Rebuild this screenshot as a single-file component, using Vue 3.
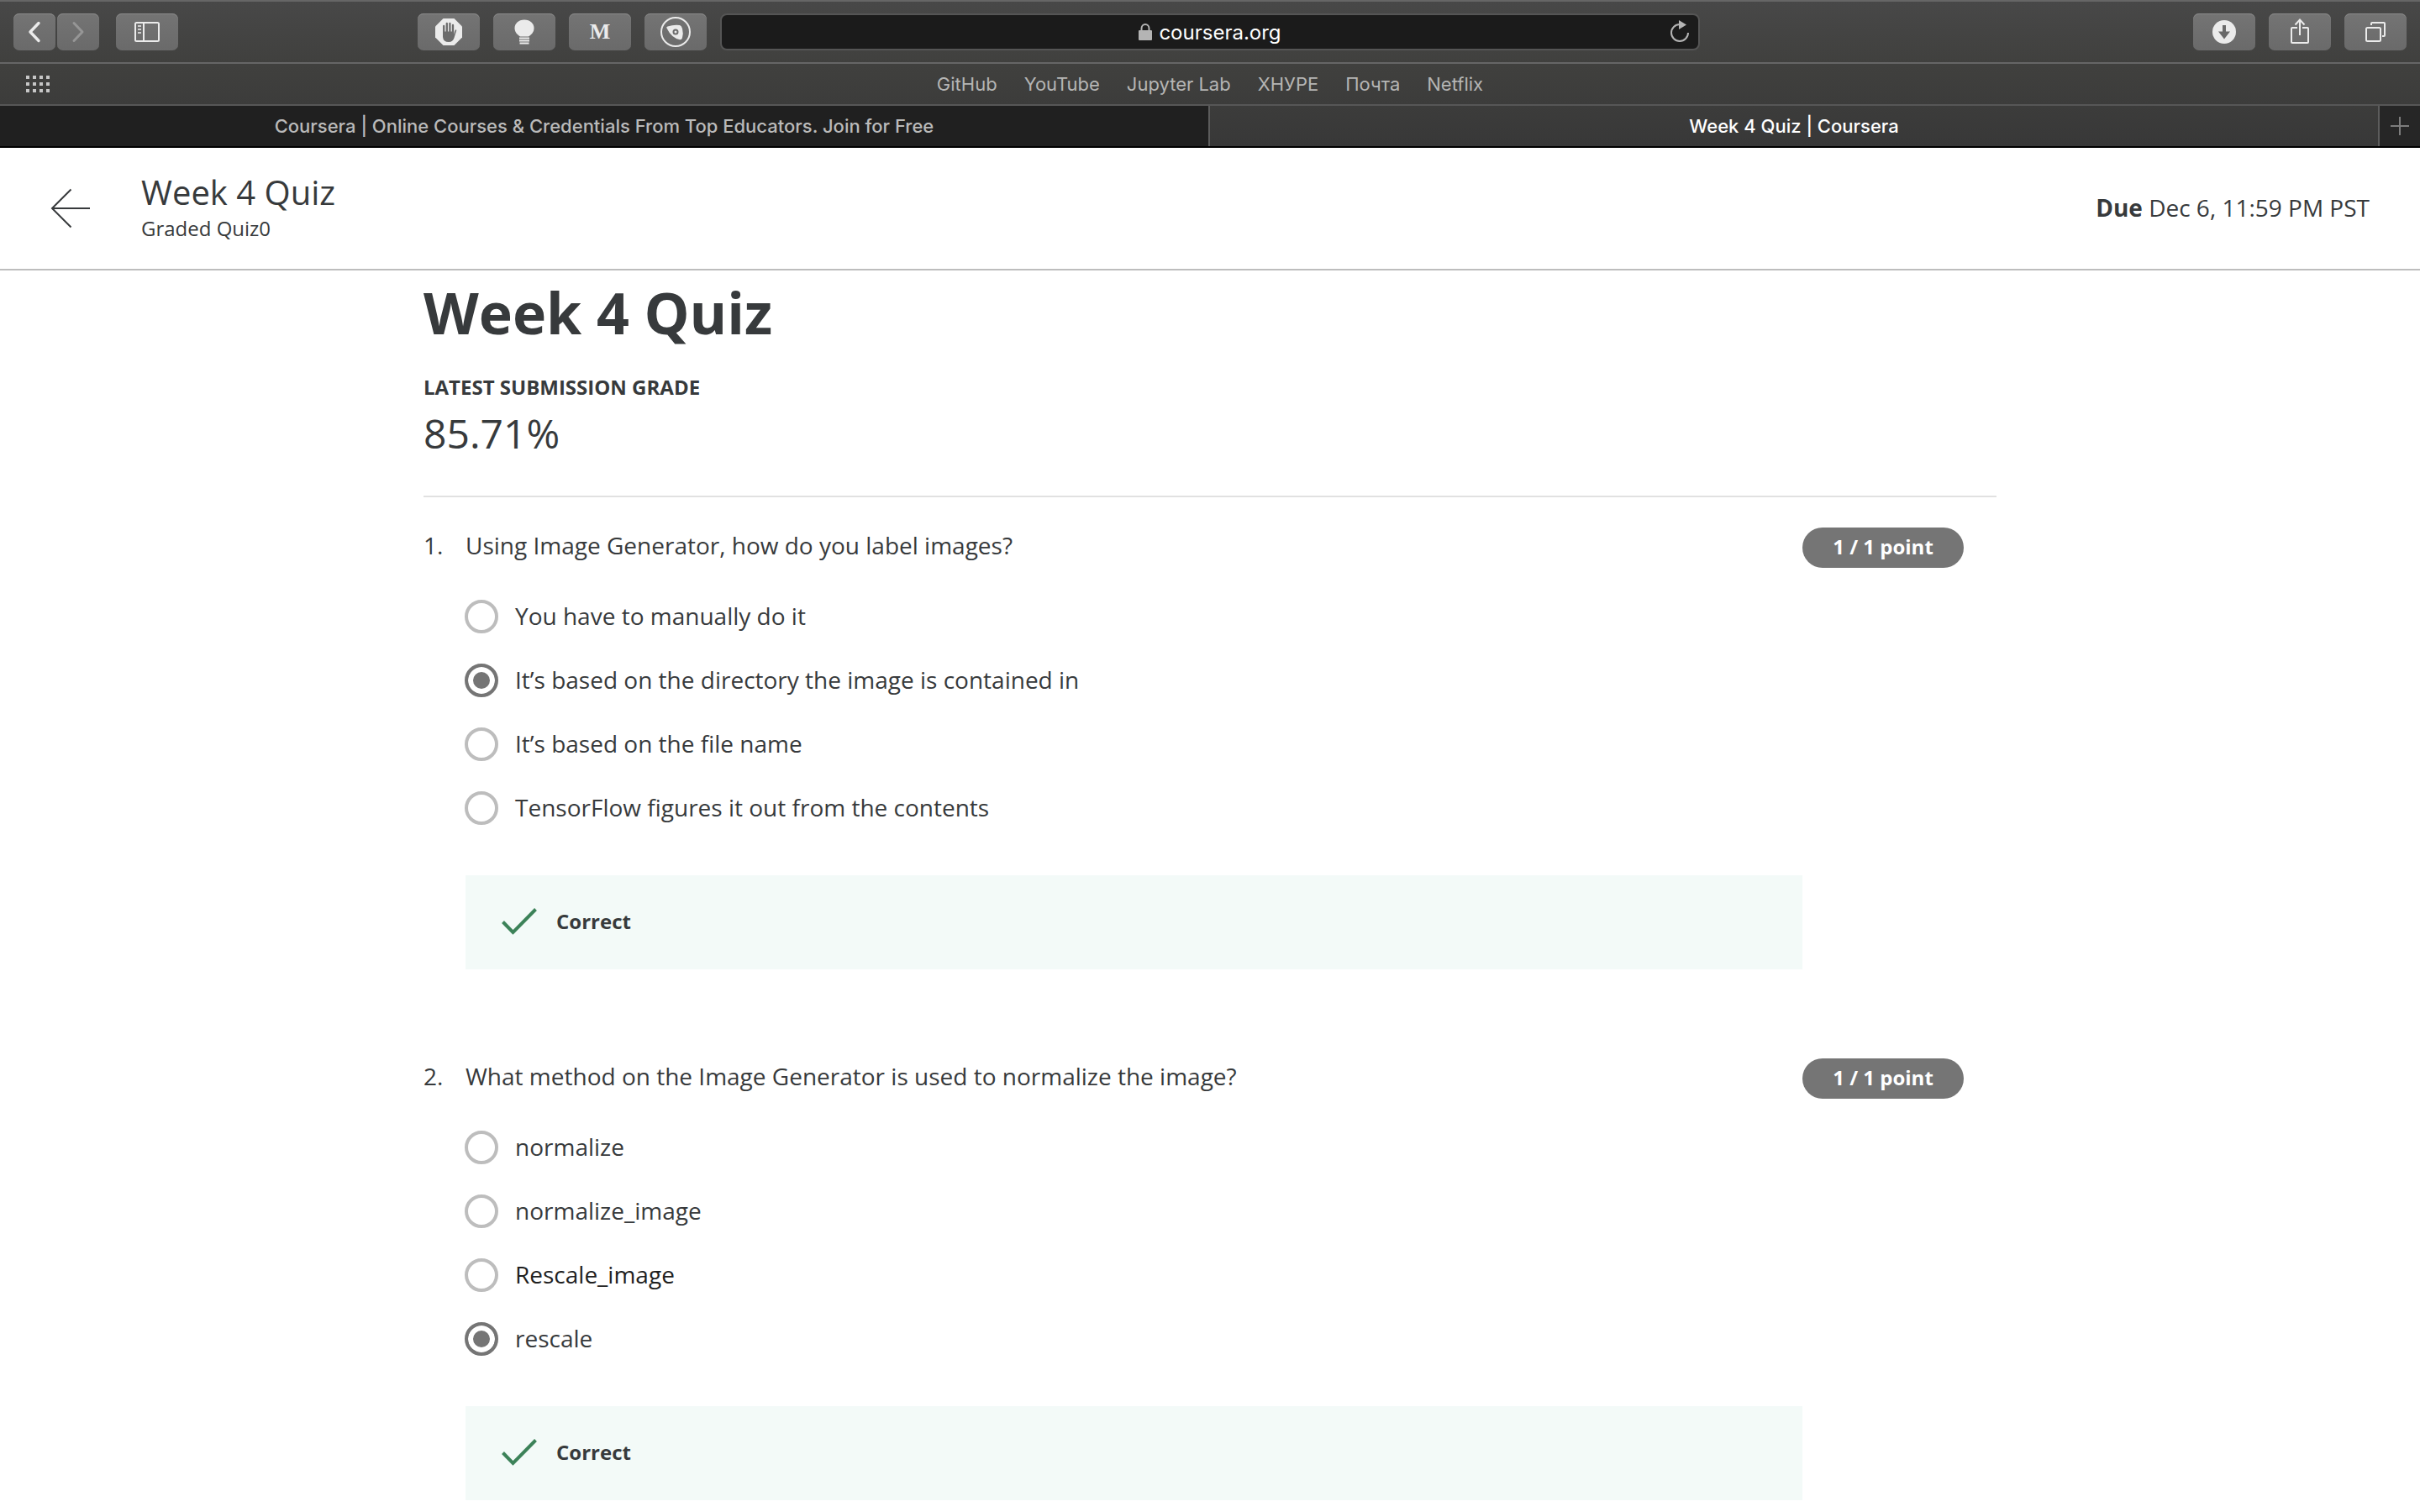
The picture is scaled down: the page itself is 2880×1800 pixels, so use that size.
<script setup>
import { ref } from 'vue'

const bookmarks = ['GitHub', 'YouTube', 'Jupyter Lab', 'ХНУРЕ', 'Почта', 'Netflix']

const questions = ref([
  {
    id: 1,
    text: 'Using Image Generator, how do you label images?',
    options: [
      { label: 'You have to manually do it' },
      { label: 'It’s based on the directory the image is contained in' },
      { label: 'It’s based on the file name' },
      { label: 'TensorFlow figures it out from the contents' }
    ],
    answer: 1
  },
  {
    id: 2,
    text: 'What method on the Image Generator is used to normalize the image?',
    options: [
      { label: 'normalize' },
      { label: 'normalize_image' },
      { label: 'Rescale_image', dark: true },
      { label: 'rescale' }
    ],
    answer: 3
  }
])
</script>

<template>
  <div class="browser">
    <div class="chrome">
      <div class="toolbar">
        <div class="tools">
          <div class="pair">
            <button class="tool narrow" type="button" aria-label="Back">
              <svg width="50" height="44" viewBox="0 0 50 44"><path d="M30 11.500L20 22L30 32.500" fill="none" stroke="#ebebeb" stroke-width="3.400" stroke-linecap="round" stroke-linejoin="round" /></svg>
            </button>
            <button class="tool narrow" type="button" aria-label="Forward">
              <svg width="50" height="44" viewBox="0 0 50 44"><path d="M20 11.500L30 22L20 32.500" fill="none" stroke="#969696" stroke-width="3" stroke-linecap="round" stroke-linejoin="round" /></svg>
            </button>
          </div>
          <button class="tool sidebar" type="button" aria-label="Show sidebar">
            <svg width="74" height="44" viewBox="0 0 74 44">
              <rect x="23" y="11" width="28" height="22" rx="1.500" fill="none" stroke="#ebebeb" stroke-width="2" />
              <path d="M33 11V33" stroke="#ebebeb" stroke-width="2" />
              <path d="M26 15H30M26 19H30M26 23H30" stroke="#d0d0d0" stroke-width="2" />
            </svg>
          </button>
          <div class="extensions">
            <button class="tool" type="button" aria-label="Ad blocker">
              <svg width="74" height="44" viewBox="0 0 74 44">
                <path d="M30.500 6H43.500L53 15.500V28.500L43.500 38H30.500L21 28.500V15.500Z" fill="#ebebeb" />
                <path d="M31.200 24V15M34.800 22V12M38.400 22V12M42 23V14" stroke="#6c6c6c" stroke-width="2.300" stroke-linecap="round" />
                <path d="M30 21.500H43.200V25L44.500 20.500Q45.500 18.500 46.300 20L43.500 29Q42 34 37 34Q30.500 34 30 28Z" fill="#6c6c6c" />
              </svg>
            </button>
            <button class="tool" type="button" aria-label="Lights">
              <svg width="74" height="44" viewBox="0 0 74 44">
                <path d="M37 7.500C44 7.500 48.500 12 48.500 17.500C48.500 22.500 45 25.500 42 27.500H32C29 25.500 25.500 22.500 25.500 17.500C25.500 12 30 7.500 37 7.500Z" fill="#ebebeb" />
                <path d="M31 29.500H43M31 32.500H43M31.500 35.500H42.500" stroke="#ebebeb" stroke-width="2" />
              </svg>
            </button>
            <button class="tool letter" type="button">M</button>
            <button class="tool" type="button" aria-label="Privacy">
              <svg width="74" height="44" viewBox="0 0 74 44">
                <circle cx="37" cy="22" r="17" fill="none" stroke="#ebebeb" stroke-width="2" />
                <path d="M26.500 17.500Q25.500 16 27.500 15.500Q35 13 42 14Q44 14.500 45 18Q46.500 24 45 29Q44.500 31.500 42 31.300Q32 29 26.500 17.500Z" fill="#ebebeb" />
                <circle cx="37" cy="22" r="2.500" fill="#ebebeb" stroke="#6c6c6c" stroke-width="2" />
              </svg>
            </button>
          </div>
        </div>

        <div class="address">
          <label class="site">
            <svg width="16" height="20" viewBox="0 0 16 20" aria-hidden="true">
              <path d="M3.500 9V6A4.500 5 0 0 1 12.500 6V9" fill="none" stroke="#b4b4b4" stroke-width="2" />
              <rect x="0" y="8" width="16" height="12" rx="1" fill="#b4b4b4" />
            </svg>
            <input type="text" aria-label="Address" value="coursera.org" size="12" />
          </label>
          <button class="reload" type="button" aria-label="Reload">
            <svg width="24" height="28" viewBox="0 0 24 28">
              <path d="M12 5A10 10 0 1 0 22 15" fill="none" stroke="#b4b4b4" stroke-width="2" />
              <path d="M11 0L20 5.500L11 11Z" fill="#b4b4b4" />
            </svg>
          </button>
        </div>

        <div class="tools end">
          <button class="tool" type="button" aria-label="Downloads">
            <svg width="74" height="44" viewBox="0 0 74 44">
              <circle cx="37" cy="22" r="14" fill="#ebebeb" />
              <path d="M35 14H39V21.500H44L37 30.500L30 21.500H35Z" fill="#6a6a6a" />
            </svg>
          </button>
          <button class="tool" type="button" aria-label="Share">
            <svg width="74" height="44" viewBox="0 0 74 44">
              <path d="M34 17H28Q27 17 27 18V34Q27 35 28 35H46Q47 35 47 34V18Q47 17 46 17H40" fill="none" stroke="#ebebeb" stroke-width="2" />
              <path d="M37 26V8M31.500 13.500L37 7.500L42.500 13.500" fill="none" stroke="#ebebeb" stroke-width="2" />
            </svg>
          </button>
          <button class="tool" type="button" aria-label="Show tabs">
            <svg width="74" height="44" viewBox="0 0 74 44">
              <rect x="26" y="17" width="17" height="16" rx="1.500" fill="none" stroke="#ebebeb" stroke-width="2" />
              <path d="M32 14V12Q32 11 33 11H47Q48 11 48 12V26Q48 27 47 27H45" fill="none" stroke="#ebebeb" stroke-width="2" />
            </svg>
          </button>
        </div>
      </div>

      <nav class="bookmarks">
        <button class="grid" type="button" aria-label="Top sites">
          <svg width="28" height="20" viewBox="0 0 28 20">
            <path d="M0 2H28M0 10H28M0 18H28" stroke="#c6c6c6" stroke-width="4" stroke-dasharray="4 4" />
          </svg>
        </button>
        <a v-for="name in bookmarks" :key="name" href="#">{{ name }}</a>
      </nav>

      <div class="tabs">
        <a class="tab" href="#">Coursera | Online Courses &amp; Credentials From Top Educators. Join for Free</a>
        <a class="tab current" href="#">Week 4 Quiz | Coursera</a>
        <button class="add" type="button" aria-label="New tab">
          <svg width="22" height="22" viewBox="0 0 22 22"><path d="M11 0V22M0 11H22" stroke="#7c7c7c" stroke-width="2" /></svg>
        </button>
      </div>
    </div>

    <header class="header">
      <a class="back" href="#" aria-label="Back">
        <svg width="48" height="48" viewBox="0 0 48 48"><path d="M24.500 1.500L2 24L24.500 46.500M2 24H47" fill="none" stroke="#373a3c" stroke-width="2" /></svg>
      </a>
      <div class="heading">
        <div class="name">Week 4 Quiz</div>
        <div class="kind">Graded Quiz0</div>
      </div>
      <div class="due"><b>Due</b> Dec 6, 11:59 PM PST</div>
    </header>

    <main class="content">
      <h1>Week 4 Quiz</h1>
      <h2>LATEST SUBMISSION GRADE</h2>
      <p class="grade">85.71%</p>

      <div class="questions">
        <section v-for="q in questions" :key="q.id" class="question">
          <div class="number">{{ q.id }}.</div>
          <fieldset class="body">
            <legend>{{ q.text }}</legend>
            <div class="options">
              <label v-for="(o, i) in q.options" :key="o.label" class="option" :class="{ dark: o.dark }">
                <input v-model="q.answer" type="radio" :name="'question-' + q.id" :value="i" />
                <span>{{ o.label }}</span>
              </label>
            </div>
            <div class="result">
              <svg width="44" height="36" viewBox="0 0 44 36" aria-hidden="true"><path d="M2.500 18.500L14.500 31L41.500 3.500" fill="none" stroke="#3c8259" stroke-width="4" /></svg>
              <span>Correct</span>
            </div>
          </fieldset>
          <div class="points">1 / 1 point</div>
        </section>
      </div>
    </main>
  </div>
</template>

<style>
body {
  background: #fff;
}
</style>

<style scoped>
.browser {
  color: #373a3c;
  font-family: "Open Sans", "Noto Sans", sans-serif;
}

button,
input {
  margin: 0;
  padding: 0;
  border: 0;
  background: none;
  font: inherit;
  color: inherit;
}

a {
  color: inherit;
  text-decoration: none;
}

svg {
  display: block;
  flex: none;
}

.chrome {
  background: linear-gradient(#484848, #40403e 44%, #383838);
  border-bottom: 2px solid #000;
  font-family: Inter, "Noto Sans", sans-serif;
}

.toolbar {
  display: grid;
  grid-template-columns: 1fr minmax(400px, 1166px) 1fr;
  align-items: center;
  box-sizing: border-box;
  height: 76px;
  border-top: 2px solid #666;
  border-bottom: 2px solid #666;
}

.tools {
  display: flex;
  padding: 0 16px;
}

.pair {
  display: flex;
  gap: 2px;
}

.tool {
  display: flex;
  align-items: center;
  justify-content: center;
  width: 74px;
  height: 44px;
  border-radius: 7px;
  background: linear-gradient(#747474, #6a6a6a);
  box-shadow: inset 0 1px #8a8a8a;
}

.tool.narrow {
  width: 50px;
}

.tool.sidebar {
  margin-left: 20px;
}

.tool.letter {
  color: #ebebeb;
  font: bold 26px "Liberation Serif", serif;
}

.extensions {
  display: flex;
  gap: 16px;
  margin-left: auto;
}

.end {
  justify-content: flex-end;
  gap: 16px;
}

.address {
  display: grid;
  grid-template-columns: 1fr auto 1fr;
  align-items: center;
  box-sizing: border-box;
  height: 44px;
  padding: 0 10px;
  border: 2px solid #555;
  border-radius: 8px;
  background: #1b1b1b;
}

.site {
  grid-column: 2;
  display: flex;
  align-items: center;
  gap: 8px;
}

.site input {
  padding-top: 2px;
  field-sizing: content;
  color: #fff;
  font-size: 24px;
  line-height: 32px;
}

.reload {
  justify-self: end;
}

.bookmarks {
  display: flex;
  align-items: center;
  justify-content: center;
  gap: 32px;
  position: relative;
  height: 48px;
  border-bottom: 2px solid #575757;
  color: #b5b5b4;
  font-size: 22px;
}

.grid {
  position: absolute;
  left: 31px;
}

.tabs {
  display: flex;
  height: 48px;
  font-size: 22px;
  font-weight: 500;
}

.tab {
  display: flex;
  align-items: center;
  justify-content: center;
  box-sizing: border-box;
  width: 50%;
  border-right: 2px solid #5c5c5c;
  background: #202020;
  color: #bababa;
  white-space: nowrap;
}

.tab.current {
  flex: 1;
  background: none;
  color: #fff;
}

.add {
  display: flex;
  align-items: center;
  justify-content: center;
  width: 48px;
  background: #262626;
}

.header {
  display: flex;
  align-items: center;
  height: 144px;
  padding: 0 60px;
  border-bottom: 2px solid #bdbdbd;
}

.heading {
  margin-left: 60px;
  padding-bottom: 2px;
}

.name {
  font-size: 40px;
  line-height: 50px;
}

.kind {
  font-size: 24px;
  line-height: 36px;
}

.due {
  margin-left: auto;
  padding-bottom: 2px;
  font-size: 28px;
  line-height: 42px;
}

.content {
  width: 65%;
  margin: 0 auto;
  padding-top: 8px;
}

h1 {
  margin: 0;
  font-size: 68px;
  line-height: 84px;
}

h2 {
  margin: 30px 0 0;
  font-size: 24px;
  line-height: 34px;
}

.grade {
  margin: 0;
  padding: 2px 0 38px;
  border-bottom: 2px solid #e1e1e1;
  font-size: 48px;
  line-height: 72px;
}

.questions {
  display: flex;
  flex-direction: column;
  gap: 106px;
  padding-top: 36px;
}

.question {
  display: flex;
  align-items: flex-start;
  padding-right: 39px;
  font-size: 28px;
  line-height: 42px;
}

.number {
  width: 50px;
}

.body {
  flex: 1;
  min-width: 0;
  margin: 0;
  padding: 0;
  border: 0;
}

legend {
  padding: 0;
}

.options {
  display: flex;
  flex-direction: column;
  align-items: flex-start;
  gap: 36px;
  margin-left: -1px;
  padding-top: 44px;
}

.option {
  display: flex;
  align-items: flex-start;
  gap: 20px;
  height: 40px;
  line-height: 38px;
}

.option.dark {
  color: #1f1f1f;
}

.option input {
  appearance: none;
  box-sizing: border-box;
  width: 40px;
  height: 40px;
  border: 4px solid #bdbdbd;
  border-radius: 50%;
}

.option input:checked {
  border-color: #757575;
  background: #757575;
  box-shadow: inset 0 0 0 6px #fff;
}

.result {
  display: flex;
  align-items: center;
  gap: 22px;
  height: 110px;
  margin-top: 60px;
  padding: 0 0 2px 42px;
  background: #f3faf8;
  font-size: 24px;
  font-weight: 700;
}

.points {
  width: 192px;
  padding-bottom: 2px;
  border-radius: 24px;
  background: #757575;
  color: #fff;
  font-size: 24px;
  font-weight: 700;
  line-height: 46px;
  text-align: center;
}
</style>
